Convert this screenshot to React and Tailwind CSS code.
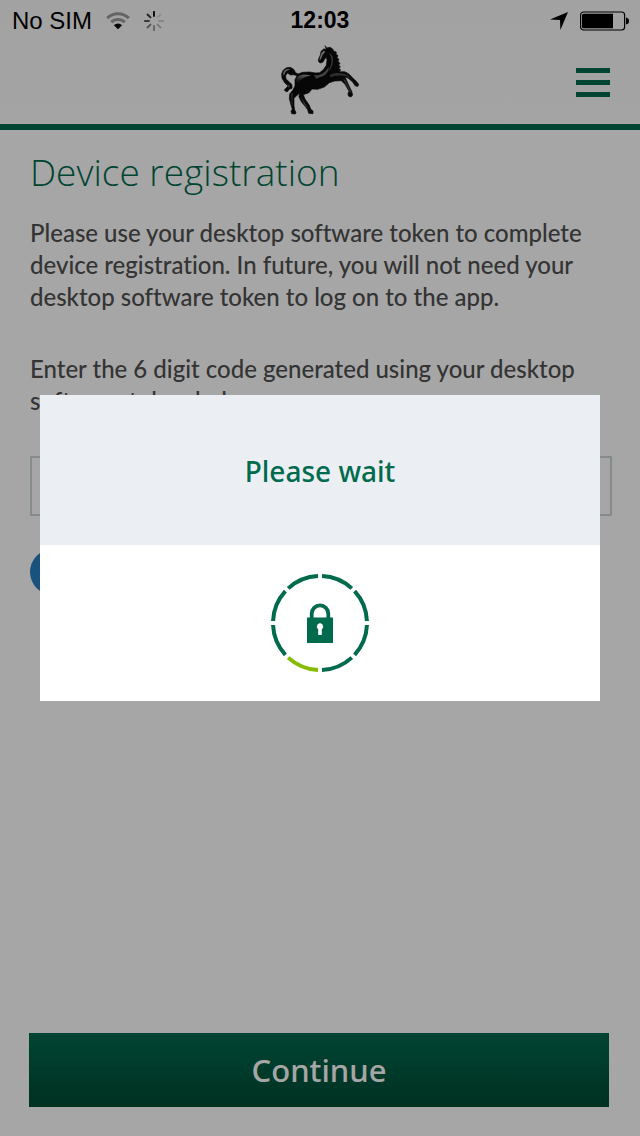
const SPOKES = [1, 0.12, 0.18, 0.25, 0.4, 0.5, 0.65, 0.8];
const SEGMENTS = [0, 1, 2, 3, 4, 5, 6, 7];

function WifiIcon() {
  return (
    <svg viewBox="0 0 24 19" className="h-[19px] w-6" aria-hidden="true">
      <g fill="none" stroke="#000" strokeOpacity="0.38" strokeWidth="3">
        <path d="M1.2 7.2A15.5 15.5 0 0 1 22.8 7.2" />
        <path d="M5.2 11.2A9.8 9.8 0 0 1 18.8 11.2" />
      </g>
      <path d="M12 18.3L7.9 14.2A5.8 5.8 0 0 1 16.1 14.2Z" fill="#000" />
    </svg>
  );
}

function ActivityIcon() {
  return (
    <svg viewBox="-10 -10 20 20" className="size-5" aria-hidden="true">
      {SPOKES.map((opacity, i) => (
        <line key={i} y1="-5" y2="-9.2" stroke="#000" strokeWidth="1.8" strokeLinecap="round" strokeOpacity={opacity} transform={`rotate(${i * 45})`} />
      ))}
    </svg>
  );
}

function LocationIcon() {
  return (
    <svg viewBox="0 0 18 18" className="size-[18px]" aria-hidden="true">
      <path d="M18 0L10.4 18L10 8.1L0 7.6Z" fill="#000" />
    </svg>
  );
}

function BatteryIcon() {
  return (
    <svg viewBox="0 0 49 20" className="h-5 w-[49px]" aria-hidden="true">
      <rect x="0.6" y="1" width="44" height="18" rx="3" fill="none" stroke="#000" strokeWidth="1.2" />
      <path d="M3.5 2.7H33V17.3H3.5Q2 17.3 2 15.8V4.2Q2 2.7 3.5 2.7Z" fill="#000" />
      <path d="M46 6.5Q49 7 49 10T46 13.5Z" fill="#000" />
    </svg>
  );
}

function HorseLogo() {
  return (
    <svg viewBox="30 15 240 210" className="h-[70px] w-20" role="img" aria-label="Black horse">
      <defs>
        <linearGradient id="sheen" x1="0" y1="0" x2="0" y2="1">
          <stop offset="0" stopColor="#a6a6a6" />
          <stop offset="1" stopColor="#111" stopOpacity="0" />
        </linearGradient>
      </defs>
      <path fill="#0c0c0c" stroke="#0c0c0c" strokeWidth="2" strokeLinejoin="round" d="M165 17L170 24L180 22L188 27L192 34L199 36L198 42L204 47L201 53L207 58L204 64L210 70L206 75L211 80L207 85L212 90L207 95L224 95L236 101L248 114L258 123L266 133L264 139L256 138L248 126L234 114L225 111L235 133L245 154L248 165L243 171L235 168L234 160L237 154L226 134L214 122L194 123L178 128L163 141L143 148L126 147L117 158L100 164L105 177L118 196L122 207L129 213L129 221L116 220L113 209L107 201L94 185L87 171L88 160L82 165L72 175L72 198L74 210L78 217L76 222L65 221L63 213L67 208L62 191L58 176L59 162L69 150L75 137L75 119L81 107L71 104L62 105L52 99L47 107L48 117L58 126L66 134L66 145L58 148L51 156L43 151L46 146L51 142L54 138L44 128L36 115L35 101L40 90L50 83L61 82L71 88L77 98L84 102L98 97L119 96L137 99L149 98L161 88L169 76L171 61L169 51L164 58L158 67L150 69L145 64L146 56L151 45L153 34L161 27L169 27Z" />
      <path fill="url(#sheen)" d="M78 126C78 110 91 103 108 104L124 106C108 111 95 114 88 126C84 133 79 137 78 126Z" />
      <path fill="#666" d="M132 105C151 108 162 99 170 89L176 81C177 97 165 108 148 112L139 116Z" />
      <path fill="#505050" d="M176 40C187 42 191 53 189 66C187 80 180 90 174 96C182 78 186 68 184 56C182 48 180 44 176 40Z" />
      <path fill="#999" d="M40 105C38 91 49 84 61 88C50 91 44 96 43 105ZM154 39L162 31L165 37L158 45L153 57L149 62L149 55Z" />
      <path fill="#454545" d="M180 105C193 98 207 98 221 101C233 104 239 112 247 121L230 109C213 104 194 106 180 112ZM219 117L226 119L238 143L244 158L239 157L231 139ZM63 164L69 157L67 171L68 198L65 192ZM92 169L98 178L109 195L115 207L103 196ZM52 131L61 138L55 144Z" />
    </svg>
  );
}

function LoadingLock() {
  return (
    <svg viewBox="-50 -50 100 100" className="size-[100px]" role="img" aria-label="Loading">
      {SEGMENTS.map((i) => (
        <path key={i} d="M2 -46.96A47 47 0 0 1 31.8 -34.6" fill="none" stroke={i === 4 ? "#84bd00" : "#006a4d"} strokeWidth="4" transform={`rotate(${i * 45})`} />
      ))}
      <path d="M-8.3 -4V-9.3A8.3 8.3 0 0 1 8.3 -9.3V-4" fill="none" stroke="#006a4d" strokeWidth="3.8" />
      <rect x="-13" y="-5.5" width="26" height="25.5" fill="#006a4d" />
      <path d="M-1.8 12V6.2A3.2 3.2 0 1 1 1.8 6.2V12Z" fill="#fff" />
    </svg>
  );
}

export default function App() {
  return (
    <div className="flex min-h-screen flex-col bg-white font-['Lato',sans-serif] text-[#505050] [font-variant-ligatures:none]">
      <header className="border-b-[6px] border-[#006a4d] bg-linear-to-b from-[#f9f9f9] to-[#fcfcfc]">
        <div className="grid h-[41px] grid-cols-3 items-center px-3 font-['Liberation_Sans',sans-serif] text-2xl text-black">
          <div className="flex items-center gap-[14px]">
            <span className="whitespace-nowrap">No SIM</span>
            <WifiIcon />
            <ActivityIcon />
          </div>
          <time className="text-center text-[23px] font-bold">12:03</time>
          <div className="-mr-px flex items-center justify-end gap-3">
            <LocationIcon />
            <BatteryIcon />
          </div>
        </div>
        <div className="grid h-[83px] grid-cols-3 items-center px-[30px]">
          <div className="col-start-2 flex justify-center pb-[6px]">
            <HorseLogo />
          </div>
          <button type="button" aria-label="Menu" className="flex w-[34px] flex-col gap-[7px] justify-self-end">
            <span className="h-[5px] bg-[#006a4d]" />
            <span className="h-[5px] bg-[#006a4d]" />
            <span className="h-[5px] bg-[#006a4d]" />
          </button>
        </div>
      </header>

      <main className="flex flex-1 flex-col pt-4 pr-7 pb-[29px] pl-[30px]">
        <h1 className="font-['Open_Sans',sans-serif] text-[37px] leading-[52px] font-[350] text-[#006a4d]">Device registration</h1>
        <p className="mt-[19px] text-2xl leading-8 font-medium">
          Please use your desktop software token to complete device registration. In future, you will not need your desktop software token to log on to the app.
        </p>
        <label htmlFor="code" className="mt-10 text-2xl leading-8 font-medium">
          Enter the 6 digit code generated using your desktop software token below
        </label>
        <input id="code" type="text" inputMode="numeric" className="mt-[39px] h-[60px] border-2 border-[#ced6da] px-4 text-2xl" />
        <button type="button" aria-label="Help" className="mt-[33px] size-[46px] rounded-full bg-[#257ec0]" />
        <button type="button" className="mt-auto mr-[3px] -ml-px h-[74px] bg-linear-to-b from-[#006a4d] to-[#004b35] font-['Noto_Sans',sans-serif] text-[31px] font-medium text-white">
          Continue
        </button>
      </main>

      <div className="fixed inset-0 flex items-center justify-center bg-black/35 px-10 pb-10">
        <div role="dialog" aria-modal="true" aria-labelledby="wait-title" className="w-full bg-white">
          <h2 id="wait-title" className="flex h-[150px] items-center justify-center bg-[#ebeff3] pt-[2px] font-['Noto_Sans',sans-serif] text-[28px] font-medium text-[#006a4d]">
            Please wait
          </h2>
          <div className="flex justify-center py-7">
            <LoadingLock />
          </div>
        </div>
      </div>
    </div>
  );
}
